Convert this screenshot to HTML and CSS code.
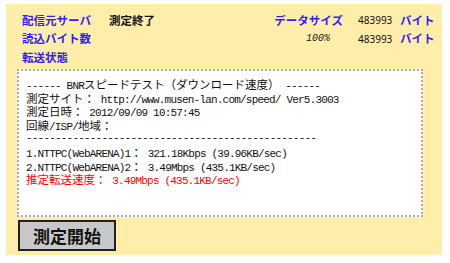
FILE: index.html
```html
<!DOCTYPE html>
<html lang="ja">
<head>
<meta charset="utf-8">
<title>BNRスピードテスト</title>
<link rel="stylesheet" href="styles.css">
</head>
<body>
<div class="panel">
  <div class="stats">
    <span class="lbl">配信元サーバ</span>
    <span class="status">測定終了</span>
    <span class="lbl end">データサイズ</span>
    <span class="num">483993</span>
    <span class="lbl unit">バイト</span>

    <span class="lbl">読込バイト数</span>
    <span></span>
    <span class="pct">100%</span>
    <span class="num">483993</span>
    <span class="lbl unit">バイト</span>

    <span class="lbl">転送状態</span>
  </div>
  <div class="result"><div class="ln">------ BNR<span class="j">スピードテスト（ダウンロード速度）</span> ------</div><div class="ln"><span class="j">測定サイト：</span> http://www.musen-lan.com/speed/ Ver5.3003</div><div class="ln"><span class="j">測定日時：</span> 2012/09/09 10:57:45</div><div class="ln"><span class="j">回線</span>/ISP/<span class="j">地域：</span></div><div class="ln">--------------------------------------------------</div><div class="ln">1.NTTPC(WebARENA)1<span class="j">：</span> 321.18Kbps (39.96KB/sec)</div><div class="ln">2.NTTPC(WebARENA)2<span class="j">：</span> 3.49Mbps (435.1KB/sec)</div><div class="ln red"><span class="j">推定転送速度：</span> 3.49Mbps (435.1KB/sec)</div></div>
  <button class="start">測定開始</button>
</div>
</body>
</html>
```

FILE: styles.css
```css
html, body {
  margin: 0;
  padding: 0;
  background: #ffffff;
}

.panel {
  margin: 4px 0 0 6px;
  width: 436px;
  height: 251px;
  box-sizing: border-box;
  background: #ffeeaa;
  padding: 7px 9px 0 0;
}

.stats {
  display: grid;
  grid-template-columns: 103px 1fr auto 49px 41px;
  grid-auto-rows: 18.5px;
  align-items: center;
  font-family: "Noto Sans CJK JP", "Noto Sans", sans-serif;
}

.lbl {
  font-size: 11.5px;
  font-weight: bold;
  color: #3322ee;
  line-height: 1;
  white-space: nowrap;
}

.stats > .lbl:first-child,
.stats > .lbl:nth-child(6),
.stats > .lbl:nth-child(11) {
  padding-left: 16px;
}

.status {
  font-size: 11.5px;
  font-weight: bold;
  color: #111;
  line-height: 1;
  white-space: nowrap;
}

.end {
  justify-self: end;
}

.num {
  font-family: "Noto Sans", sans-serif;
  font-size: 10px;
  color: #111;
  padding-left: 15px;
  line-height: 1;
}

.unit {
  padding-left: 8px;
}

.pct {
  justify-self: end;
  margin-right: 13px;
  font-family: "Liberation Mono", monospace;
  font-style: italic;
  font-size: 10px;
  color: #222;
  line-height: 1;
}

.result {
  margin: 2.5px 0 0 11px;
  width: 406px;
  height: 148px;
  box-sizing: border-box;
  background: #ffffff;
  border: 2px dotted #aaaaaa;
  padding: 7px 0 0 7px;
  font-family: "Liberation Mono", monospace;
  font-size: 11px;
  letter-spacing: -0.8px;
  color: #111;
}

.ln {
  white-space: pre;
  height: 13.6px;
  line-height: 13.6px;
}

.j {
  font-family: "Noto Sans CJK JP", sans-serif;
  font-size: 11.5px;
  letter-spacing: 0;
}

.red {
  color: #ff0000;
}

.start {
  display: block;
  margin: 3px 0 0 12px;
  width: 98px;
  height: 31px;
  box-sizing: border-box;
  background: #c8c8c8;
  border: 2px solid #222;
  border-radius: 0;
  padding: 0;
  font-family: "Noto Sans CJK JP", sans-serif;
  font-size: 17px;
  font-weight: bold;
  color: #111;
  line-height: 1;
}
```
